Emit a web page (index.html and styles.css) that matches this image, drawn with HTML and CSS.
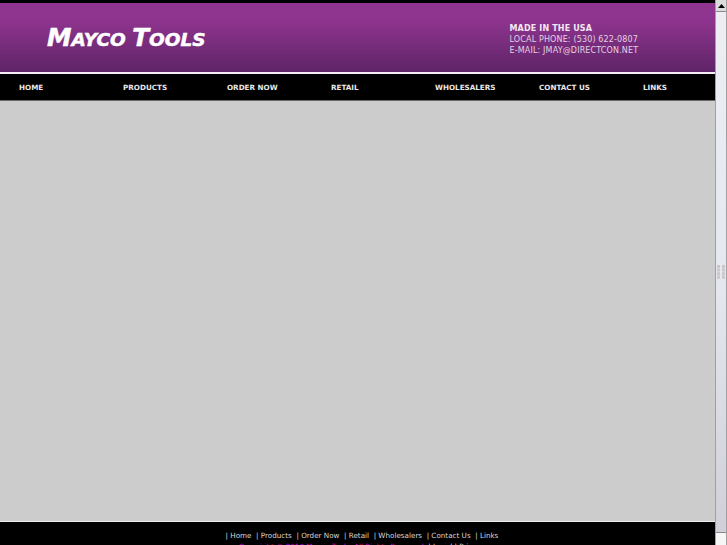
FILE: index.html
```html
<!DOCTYPE html>
<html lang="en">
<head>
<meta charset="utf-8">
<title>Mayco Tools</title>
<link rel="stylesheet" href="styles.css">
</head>
<body>
<div class="window">
  <div class="page">
    <header class="header">
      <div class="logo"><span class="cap">M</span>AYCO <span class="cap">T</span>OOLS</div>
      <div class="contact">
        <div class="contact-title">MADE IN THE USA</div>
        <div>LOCAL PHONE: (530) 622-0807</div>
        <div>E-MAIL: JMAY@DIRECTCON.NET</div>
      </div>
    </header>
    <nav class="nav">
      <a>HOME</a><a>PRODUCTS</a><a>ORDER NOW</a><a>RETAIL</a><a>WHOLESALERS</a><a>CONTACT US</a><a>LINKS</a>
    </nav>
    <main class="content"></main>
    <footer class="footer">
      <div class="footer-links">| Home &nbsp;| Products &nbsp;| Order Now &nbsp;| Retail &nbsp;| Wholesalers &nbsp;| Contact Us &nbsp;| Links</div>
      <div class="footer-copy"><span class="magenta">Copyright © 2010 Mayco Tools. All Rights Reserved</span> &nbsp;| Legal | Privacy</div>
    </footer>
  </div>
  <div class="scrollbar">
    <div class="arrow"><svg width="7" height="4" viewBox="0 0 7 4"><path d="M3.5 0 L7 4 H0 Z" fill="#000"/></svg></div>
    <div class="thumb">
      <svg class="grip" width="8" height="14" viewBox="0 0 8 14"><path d="M0 0h3v3H0zM5 0h3v3H5zM0 3.6h3v3H0zM5 3.6h3v3H5zM0 7.2h3v3H0zM5 7.2h3v3H5zM0 10.8h3v3H0zM5 10.8h3v3H5z" fill="#c8c8cc"/></svg>
    </div>
    <div class="track-end"></div>
  </div>
</div>
</body>
</html>
```
FILE: styles.css
```css
html, body {
  margin: 0;
  padding: 0;
  height: 100%;
  overflow: hidden;
}
.window {
  display: flex;
  height: 545px;
  width: 727px;
  overflow: hidden;
}
.page {
  flex: 0 0 715px;
  display: flex;
  flex-direction: column;
  height: 545px;
  overflow: hidden;
  background: #000;
  font-family: "DejaVu Sans", sans-serif;
}
.header {
  flex: 0 0 69px;
  margin-top: 3px;
  display: flex;
  justify-content: space-between;
  background: linear-gradient(#90358f 0%, #8e348e 25%, #5f2468 100%);
  border-bottom: 2px solid #f4eef4;
}
.logo {
  margin: 20px 0 0 47px;
  font-family: "DejaVu Sans", sans-serif;
  font-weight: 700;
  font-style: italic;
  font-size: 18.5px;
  line-height: 30px;
  color: #fff;
  -webkit-text-stroke: 0.5px #fff;
  white-space: nowrap;
}
.cap {
  font-size: 24.6px;
}
.contact {
  width: 205.5px;
  padding-top: 20px;
  font-size: 8px;
  line-height: 11px;
  letter-spacing: 0.15px;
  color: #e4d2e4;
  white-space: nowrap;
}
.contact-title {
  font-weight: 700;
  color: #f2e8f2;
}
.nav {
  flex: 0 0 26px;
  display: flex;
  align-items: center;
  padding-left: 19px;
  background: #000;
  border-bottom: 1px solid #6a6a6a;
}
.nav a {
  flex: 0 0 104px;
  font-size: 7.2px;
  font-weight: 700;
  padding-top: 1px;
  color: #e8e8e8;
  white-space: nowrap;
}
.content {
  flex: 0 0 420px;
  background: #cccccc;
  border-bottom: 1px solid #eeeeee;
}
.footer {
  flex: 1 0 auto;
  background: #000;
  padding: 9px 0 0 9px;
  font-size: 7.2px;
  line-height: 10.5px;
  text-align: center;
  color: #d8d8d8;
  white-space: nowrap;
}
.magenta {
  color: #cc00cc;
}
.scrollbar {
  flex: 0 0 12px;
  display: flex;
  flex-direction: column;
  background: #f4f4f6;
  border-left: 1px solid #a0a0a0;
  border-right: 1px solid #a0a0a0;
  box-sizing: border-box;
}
.arrow {
  flex: 0 0 12px;
  display: flex;
  align-items: center;
  justify-content: center;
  background: #dcdcdc;
  border-bottom: 1px solid #8a8a8a;
  box-sizing: border-box;
}
.thumb {
  flex: 1 1 auto;
  display: flex;
  align-items: center;
  justify-content: center;
  background: linear-gradient(#eceef4 0%, #e6e8f0 50%, #cfd0d8 100%);
  border-bottom: 1px solid #8a8a8a;
}
.track-end {
  flex: 0 0 12px;
  background: #f6f6f6;
}
```
